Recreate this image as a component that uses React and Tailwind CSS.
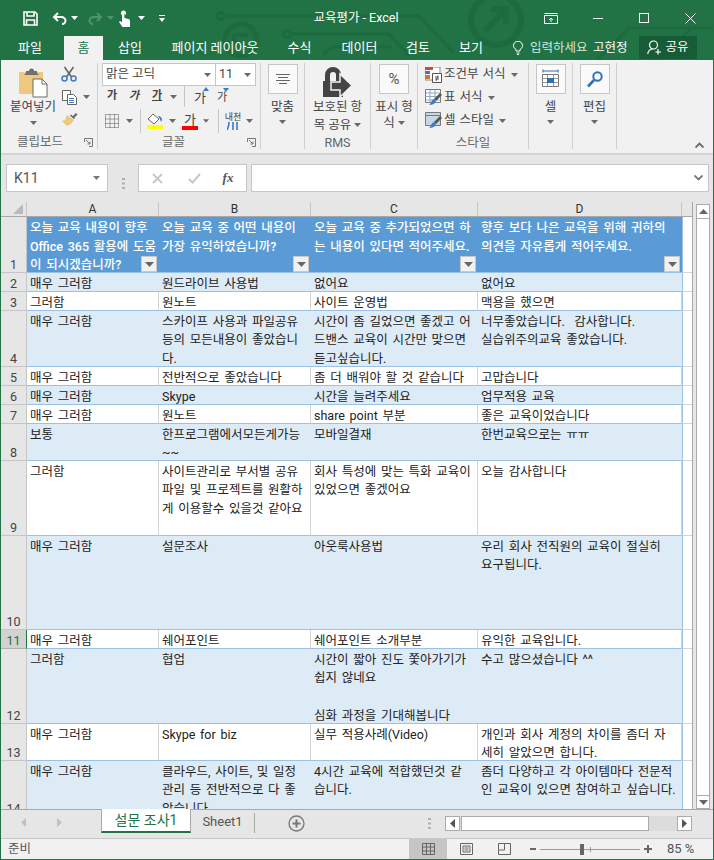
const rows = [
  { n: 2, h: 19, band: true, cells: ["매우 그러함", "원드라이브 사용법", "없어요", "없어요"] },
  { n: 3, h: 19, cells: ["그러함", "원노트", "사이트 운영법", "맥용을 했으면"] },
  { n: 4, h: 56, band: true, cells: ["매우 그러함", "스카이프 사용과 파일공유\n등의 모든내용이 좋았습니\n다.", "시간이 좀 길었으면 좋겠고 어\n드밴스 교육이 시간만 맞으면\n듣고싶습니다.", "너무좋았습니다.  감사합니다.\n실습위주의교육 좋았습니다."] },
  { n: 5, h: 19, cells: ["매우 그러함", "전반적으로 좋았습니다", "좀 더 배워야 할 것 같습니다", "고맙습니다"] },
  { n: 6, h: 19, band: true, cells: ["매우 그러함", "Skype", "시간을 늘려주세요", "업무적용 교육"] },
  { n: 7, h: 19, cells: ["매우 그러함", "원노트", "share point 부분", "좋은 교육이었습니다"] },
  { n: 8, h: 37, band: true, cells: ["보통", "한프로그램에서모든게가능\n~~", "모바일결재", "한번교육으로는 ㅠㅠ"] },
  { n: 9, h: 75, cells: ["그러함", "사이트관리로 부서별 공유\n파일 및 프로젝트를 원활하\n게 이용할수 있을것 같아요", "회사 특성에 맞는 특화 교육이\n있었으면 좋겠어요", "오늘 감사합니다"] },
  { n: 10, h: 94, band: true, cells: ["매우 그러함", "설문조사", "아웃룩사용법", "우리 회사 전직원의 교육이 절실히\n요구됩니다."] },
  { n: 11, h: 19, active: true, cells: ["매우 그러함", "쉐어포인트", "쉐어포인트 소개부분", "유익한 교육입니다."] },
  { n: 12, h: 75, band: true, cells: ["그러함", "협업", "시간이 짧아 진도 쫓아가기가\n쉽지 않네요\n\n심화 과정을 기대해봅니다", "수고 많으셨습니다 ^^"] },
  { n: 13, h: 37, cells: ["매우 그러함", "Skype for biz", "실무 적용사례(Video)", "개인과 회사 계정의 차이를 좀더 자\n세히 알았으면 합니다."] },
  { n: 14, h: 56, band: true, cells: ["매우 그러함", "클라우드, 사이트, 및 일정\n관리 등 전반적으로 다 좋\n았습니다.", "4시간 교육에 적합했던것 같\n습니다.", "좀더 다양하고 각 아이템마다 전문적\n인 교육이 있으면 참여하고 싶습니다."] },
];

const headers = [
  "오늘 교육 내용이 향후\nOffice 365 활용에 도움\n이 되시겠습니까?",
  "오늘 교육 중 어떤 내용이\n가장 유익하였습니까?",
  "오늘 교육 중 추가되었으면 하\n는 내용이 있다면 적어주세요.",
  "향후 보다 나은 교육을 위해 귀하의\n의견을 자유롭게 적어주세요.",
];

const colWidths = ["w-[132px]", "w-[152px]", "w-[167px]", "w-[204px]"];

const Caret = ({ color = "#6a6a6a" }) => (
  <svg width="7" height="4" viewBox="0 0 7 4"><path d="M0 0h7L3.5 4z" fill={color} /></svg>
);

const Cell = ({ className = "", children }) => (
  <div className={`flex items-center justify-center shrink-0 ${className}`}>{children}</div>
);

const RowHeader = ({ n, active }) => (
  <div className={`w-[26px] shrink-0 flex items-end justify-center border-r border-b text-[12.5px] leading-[15px] ${active ? "bg-[#d2d2d2] text-[#217346] border-r-[#217346] border-b-[#b0b0b0]" : "bg-[#e6e6e6] text-[#444] border-r-[#c6c6c6] border-b-[#c6c6c6]"}`}>
    {n}
  </div>
);

const FilterButton = () => (
  <div className="absolute right-[2px] bottom-0 w-[16px] h-[16px] bg-[#f1f1f1] border border-[#c8c8c8] flex items-center justify-center">
    <svg width="9" height="5" viewBox="0 0 9 5"><path d="M0 0h9L4.5 5z" fill="#666" /></svg>
  </div>
);

const CircuitArt = () => (
  <svg className="absolute left-0 top-0 w-[714px] h-[60px]" viewBox="0 0 714 60" fill="none" stroke="#1d6a3e" strokeWidth="3">
    <circle cx="220" cy="16" r="3.5" />
    <path d="M224 16H400h18l34 36" />
    <circle cx="286" cy="34" r="3.5" />
    <path d="M290 34h98l20 22" />
    <path d="M322 54l10-7h58" />
    <circle cx="240" cy="40" r="16" strokeWidth="5" />
    <path d="M233 35h14M233 35v12" strokeWidth="4" />
    <circle cx="495" cy="20" r="25" strokeWidth="6" />
    <path d="M484 31l20-21M490 9h15v15" strokeWidth="6" />
    <path d="M596 60l32-32h86M655 60l34-30" />
  </svg>
);

const SaveIcon = () => (
  <svg width="15" height="15" viewBox="0 0 15 15" fill="none" stroke="#fff" strokeWidth="1.6">
    <path d="M1 1h11l2 2v11H1z" />
    <path d="M4 1v4h7V1M3.5 14V9h8v5" />
  </svg>
);

const UndoIcon = ({ color, flip }) => (
  <svg width="15" height="13" viewBox="0 0 15 13" fill="none" stroke={color} strokeWidth="2" className={flip ? "-scale-x-100" : ""}>
    <path d="M6 1L2 5l4 4M2 5h7c3 0 4.500 2 4.500 3.500S12.500 12 10 12" />
  </svg>
);

const TouchIcon = () => (
  <svg width="13" height="17" viewBox="0 0 13 17" fill="#fff">
    <path d="M3 3a2.500 2.500 0 015 0v2a3.500 3.500 0 00-5 0z" />
    <path d="M4 3.500a1.200 1.200 0 012.400 0V8l4 1c1.200.3 1.600 1 1.600 2v6H4.500L1 12l1-1 2 1.200z" />
  </svg>
);

const PasteIcon = () => (
  <svg width="30" height="30" viewBox="0 0 30 30">
    <path d="M1 4h24v22H1z" fill="#edc87e" />
    <path d="M8 5V3h3a2.500 2.500 0 015 0h3v2l2 2H6z" fill="#707070" />
    <path d="M15 11h9l5 5v13H15z" fill="#fff" stroke="#6a6a6a" />
    <path d="M24 11v5h5" fill="none" stroke="#6a6a6a" />
  </svg>
);

const ScissorsIcon = () => (
  <svg width="16" height="16" viewBox="0 0 16 16" fill="none">
    <path d="M3.500 1l7 10M12.500 1l-7 10" stroke="#666" strokeWidth="1.600" />
    <circle cx="3.500" cy="12.500" r="2.500" stroke="#3f7cbf" strokeWidth="1.500" />
    <circle cx="12.500" cy="12.500" r="2.500" stroke="#3f7cbf" strokeWidth="1.500" />
  </svg>
);

const CopyIcon = () => (
  <svg width="16" height="16" viewBox="0 0 16 16" fill="#fff" stroke="#666">
    <path d="M1.500 1.500h8v10h-8z" />
    <path d="M6.500 5.500h6l3 3v7h-9z" />
    <path d="M8 9.500h5M8 11.500h5M8 13.500h5" stroke="#3f7cbf" />
  </svg>
);

const BrushIcon = () => (
  <svg width="17" height="15" viewBox="0 0 17 15">
    <path d="M11 5l4-4 1.500 1.500-4 4z" fill="#666" />
    <path d="M6 3l7 5-3 4-4 2-5-5 3-1z" fill="#edc87e" />
    <path d="M9 3.500l1-1 4 3.500-1 1z" fill="#666" />
  </svg>
);

const BorderIcon = () => (
  <svg width="14" height="14" viewBox="0 0 14 14" fill="none" stroke="#555" strokeDasharray="1 1">
    <path d="M.5.500h13v13H.500zM.500 5h13M.500 9.500h13M5 .500v13M9.500.500v13" />
  </svg>
);

const FillIcon = () => (
  <div className="flex flex-col items-center">
    <svg width="16" height="12" viewBox="0 0 16 12" fill="none">
      <path d="M6 1l6 5-5 5-6-5z" fill="#fff" stroke="#666" />
      <path d="M11 3c2 0 4 1 4 4l-1 2-1-3z" fill="#3f7cbf" />
    </svg>
    <div className="w-[16px] h-[4px] bg-[#ffff00]" />
  </div>
);

const AlignIcon = () => (
  <svg width="14" height="12" viewBox="0 0 14 12" stroke="#666"><path d="M0 1.500h14M2 4.500h10M0 7.500h14M3 10.500h8" /></svg>
);

const LockIcon = () => (
  <svg width="29" height="30" viewBox="0 0 29 30" fill="#444">
    <path d="M2 14V8a8 8 0 0116 0v6h-5V8a3 3 0 00-6 0v6z" />
    <path d="M0 14h20v16H0z" />
    <path d="M8 15h9V7l12 11.500L17 30v-7H8z" stroke="#f1f1f1" strokeWidth="1.500" />
  </svg>
);

const CondIcon = () => (
  <svg width="17" height="16" viewBox="0 0 17 16">
    <path d="M0 0h15v13H0z" fill="#fff" stroke="#888" />
    <path d="M0 0h8v3H0z" fill="#c8502a" />
    <path d="M0 4h5v3H0z" fill="#4472c4" />
    <path d="M0 8h5v4H0z" fill="#d9722c" />
    <path d="M7.500 6.500h9v9h-9z" fill="#fff" stroke="#555" />
    <path d="M10 10h4M10 12h4M13 8.500l-2 5.500" stroke="#555" fill="none" />
  </svg>
);

const TableIcon = ({ plain }) => (
  <svg width="17" height="17" viewBox="0 0 17 17">
    <path d="M.5.500h15v13H.500z" fill={plain ? "#c9d6e6" : "#fff"} stroke="#777" />
    {!plain && <path d="M.500 4h15M.500 7.500h15M.500 11h15M5 .500v13M10 .500v13" stroke="#8fa8c4" fill="none" />}
    {plain && <path d="M.500 3.500h15" stroke="#777" fill="none" />}
    <path d="M15 4l2 2-6 6-2-2z" fill="#555" />
    <path d="M9 10l2 2c-1 3-4 4-7 4 2-1 2-5 5-6z" fill="#3f7cbf" />
  </svg>
);

const CellsIcon = () => (
  <svg width="19" height="20" viewBox="0 0 19 20" fill="none">
    <path d="M1.500 5.500h16v12h-16z" fill="#fff" stroke="#777" />
    <path d="M1.500 9.500h16M1.500 13.500h16M6.500 5.500v12M12.500 5.500v12" stroke="#999" />
    <path d="M6 9h7v5H6z" fill="#2f6fb5" />
    <path d="M2 2h15M2 .500v3M17 .500v3" stroke="#2f6fb5" />
  </svg>
);

const SearchIcon = () => (
  <svg width="16" height="17" viewBox="0 0 16 17" fill="none" stroke="#2f72b8">
    <circle cx="10.500" cy="5.500" r="4.200" strokeWidth="2" />
    <path d="M7 9l-6 6.500" strokeWidth="2.600" />
  </svg>
);

const Launcher = () => (
  <svg width="9" height="9" viewBox="0 0 9 9" fill="none" stroke="#777">
    <path d="M.5 4V.500H8.500V8.500H5" />
    <path d="M2 2l4 4M6 3.500V6H3.500" />
  </svg>
);

const ToolSep = ({ className = "" }) => <div className={`w-px shrink-0 bg-[#c6c6c6] ${className}`} />;

const BigButton = ({ children }) => (
  <div className="w-[30px] h-[30px] bg-[#fafafa] border border-[#c6c6c6] flex items-center justify-center">{children}</div>
);

// 버튼 하나짜리 그룹 (맞춤, 셀, 편집, 표시 형식)
const ButtonGroup = ({ width, icon, lines }) => (
  <div className={`${width} shrink-0 border-r border-[#d0d0d0] flex flex-col items-center pt-[1px] text-[12.5px] leading-[16px] text-[#444]`}>
    <BigButton>{icon}</BigButton>
    <div className="mt-[5px] whitespace-nowrap">{lines[0]}</div>
    {lines[1] ? (
      <div className="whitespace-nowrap flex items-center gap-[3px]">{lines[1]}<Caret /></div>
    ) : (
      <div className="mt-[5px] flex"><Caret /></div>
    )}
  </div>
);

const StyleRow = ({ icon, label }) => (
  <div className="flex items-center h-[23px] gap-[1px] text-[12.5px] whitespace-nowrap text-[#444] [word-spacing:1px]">
    <div className="w-[19px] flex items-center justify-center">{icon}</div>
    <span>{label}</span>
    <div className="ml-[4px] flex"><Caret /></div>
  </div>
);

const Ribbon = () => (
  <div className="h-[95px] shrink-0 bg-[#f1f1f1] border-b-2 border-[#d4d4d4] pt-[3px] pb-[4px] flex text-[#444]">
    {/* 클립보드 */}
    <div className="w-[97px] shrink-0 border-r border-[#d0d0d0] flex flex-col">
      <div className="flex-1 flex min-h-0">
        <div className="w-[56px] shrink-0 pl-[8px] pt-[5px] flex flex-col items-center text-[12.5px] leading-[16px]">
          <PasteIcon />
          <div className="mt-[1px] whitespace-nowrap">붙여넣기</div>
          <div className="mt-[6px] flex"><Caret /></div>
        </div>
        <div className="flex flex-col -mt-px">
          <Cell className="w-[24px] h-[23px]"><ScissorsIcon /></Cell>
          <div className="flex items-center h-[23px]">
            <Cell className="w-[24px]"><CopyIcon /></Cell>
            <Cell className="w-[10px]"><Caret /></Cell>
          </div>
          <Cell className="w-[24px] h-[23px]"><BrushIcon /></Cell>
        </div>
      </div>
      <div className="h-[13px] flex items-center justify-between pl-[16px] pr-[4px] text-[12.5px] text-[#666]">
        <span>클립보드</span>
        <Launcher />
      </div>
    </div>

    {/* 글꼴 */}
    <div className="w-[163px] shrink-0 border-r border-[#d0d0d0] flex flex-col pl-[4px]">
      <div className="flex h-[23px] w-[154px] bg-white border border-[#c6c6c6] text-[12.5px]">
        <div className="w-[113px] flex items-center justify-between pl-[3px] pr-[4px] border-r border-[#c6c6c6]">
          <span>맑은 고딕</span><Caret />
        </div>
        <div className="flex-1 flex items-center justify-between pl-[3px] pr-[4px]">
          <span>11</span><Caret />
        </div>
      </div>
      <div className="flex items-center h-[21px] text-[11px] font-bold">
        <Cell className="w-[20px]">가</Cell>
        <Cell className="w-[24px] italic">가</Cell>
        <Cell className="w-[22px] underline">가</Cell>
        <Cell className="w-[10px]"><Caret /></Cell>
        <div className="w-[6px] shrink-0" />
        <ToolSep className="h-[21px]" />
        <Cell className="w-[30px] relative text-[13px] font-normal pt-[2px]">
          가
          <svg className="absolute right-[6px] top-[1px]" width="6" height="4" viewBox="0 0 6 4"><path d="M3 0l3 4H0z" fill="#3f7cbf" /></svg>
        </Cell>
        <Cell className="w-[14px] relative text-[11px] font-normal pt-[3px]">
          가
          <svg className="absolute right-0 top-[1px]" width="6" height="4" viewBox="0 0 6 4"><path d="M0 0h6L3 4z" fill="#3f7cbf" /></svg>
        </Cell>
      </div>
      <div className="flex items-center h-[24px] mt-[2px]">
        <Cell className="w-[20px]"><BorderIcon /></Cell>
        <Cell className="w-[14px]"><Caret /></Cell>
        <div className="w-[4px] shrink-0" />
        <ToolSep className="h-[24px]" />
        <div className="w-[2px] shrink-0" />
        <Cell className="w-[24px]"><FillIcon /></Cell>
        <Cell className="w-[10px]"><Caret /></Cell>
        <Cell className="w-[26px]">
          <div className="flex flex-col items-center text-[13px] leading-[13px]">
            가
            <div className="w-[16px] h-[4px] bg-[#ff0000]" />
          </div>
        </Cell>
        <Cell className="w-[6px]"><Caret /></Cell>
        <div className="w-[9px] shrink-0" />
        <ToolSep className="h-[24px]" />
        <div className="w-[2px] shrink-0" />
        <Cell className="w-[24px]">
          <div className="flex flex-col items-center text-[9px] leading-[9px]">
            내천
            <svg width="12" height="8" viewBox="0 0 12 8" stroke="#2f72b8" strokeWidth="1.500"><path d="M2 0c0 4-1 6-2 8M6 0v8M10 0v8" fill="none" /></svg>
          </div>
        </Cell>
        <Cell className="w-[8px]"><Caret /></Cell>
      </div>
      <div className="flex-1" />
      <div className="h-[13px] flex items-center justify-between pl-[60px] pr-[4px] text-[12.5px] text-[#666]">
        <span>글꼴</span>
        <Launcher />
      </div>
    </div>

    <ButtonGroup width="w-[44px]" icon={<AlignIcon />} lines={["맞춤"]} />

    {/* RMS */}
    <div className="w-[66px] shrink-0 border-r border-[#d0d0d0] flex flex-col items-center text-[12.5px] leading-[16px]">
      <div className="mt-[4px] flex"><LockIcon /></div>
      <div className="mt-[2px] whitespace-nowrap">보호된 항</div>
      <div className="whitespace-nowrap flex items-center gap-[3px] mt-[2px]">목 공유<Caret /></div>
      <div className="flex-1" />
      <div className="h-[13px] text-[#666] leading-[13px]">RMS</div>
    </div>

    <ButtonGroup
      width="w-[47px]"
      icon={<span className="text-[15px] text-[#555]">%</span>}
      lines={["표시 형", "식"]}
    />

    {/* 스타일 */}
    <div className="w-[111px] shrink-0 border-r border-[#d0d0d0] flex flex-col pl-[6px]">
      <StyleRow icon={<CondIcon />} label="조건부 서식" />
      <StyleRow icon={<TableIcon />} label="표 서식" />
      <StyleRow icon={<TableIcon plain />} label="셀 스타일" />
      <div className="flex-1" />
      <div className="h-[13px] text-center pr-[6px] text-[12.5px] leading-[13px] text-[#666]">스타일</div>
    </div>

    <ButtonGroup width="w-[44px]" icon={<CellsIcon />} lines={["셀"]} />
    <ButtonGroup width="w-[44px]" icon={<SearchIcon />} lines={["편집"]} />

    <div className="flex-1 flex items-end justify-end pr-[9px] pb-[1px]">
      <svg width="9" height="6" viewBox="0 0 9 6" fill="none" stroke="#666" strokeWidth="1.800"><path d="M.5 5.500l4-4 4 4" /></svg>
    </div>
  </div>
);

const FormulaBar = () => (
  <div className="h-[47px] shrink-0 bg-[#e6e6e6] pt-[9px] pl-[5px] pr-[4px] flex text-[#555]">
    <div className="w-[102px] h-[28px] bg-white border border-[#c6c6c6] flex items-center justify-between pl-[7px] pr-[7px] text-[14px]">
      <span>K11</span><Caret color="#777" />
    </div>
    <div className="w-[30px] flex items-center justify-center">
      <svg width="3" height="11" viewBox="0 0 3 11" fill="#b0b0b0"><path d="M0 0h3v2H0zM0 4.500h3v2H0zM0 9h3v2H0z" /></svg>
    </div>
    <div className="w-[109px] h-[28px] bg-white border border-[#c6c6c6] flex items-center">
      <Cell className="w-[37px]">
        <svg width="11" height="11" viewBox="0 0 11 11" stroke="#c6c6c6" strokeWidth="1.800"><path d="M1 1l9 9M10 1l-9 9" /></svg>
      </Cell>
      <Cell className="w-[37px]">
        <svg width="13" height="11" viewBox="0 0 13 11" fill="none" stroke="#c6c6c6" strokeWidth="2"><path d="M1 6l3.500 3.500L12 1" /></svg>
      </Cell>
      <Cell className="w-[30px] font-['Liberation_Serif',serif] italic text-[13px] font-bold text-[#555]">fx</Cell>
    </div>
    <div className="w-[4px] shrink-0" />
    <div className="flex-1 h-[28px] bg-white border border-[#c6c6c6] flex items-center justify-end pr-[5px]">
      <svg width="9" height="6" viewBox="0 0 9 6" fill="none" stroke="#777" strokeWidth="1.800"><path d="M.5.500l4 4 4-4" /></svg>
    </div>
  </div>
);

const Sheet = () => (
  <div className="h-[607px] shrink-0 flex bg-[#e6e6e6]">
    <div className="w-[691px] shrink-0 flex flex-col overflow-hidden bg-white text-[12.5px] leading-[18.7px] text-[#222] [word-spacing:1.6px]">
      <div className="h-[15px] shrink-0 flex bg-[#e6e6e6] border-b border-[#a8a8a8] text-[#333] text-[12px] leading-[14px]">
        <div className="w-[26px] shrink-0 border-r border-[#c6c6c6] flex items-end justify-end pr-[3px] pb-[2px]">
          <svg width="10" height="10" viewBox="0 0 10 10"><path d="M10 0v10H0z" fill="#b9b9b9" /></svg>
        </div>
        {["A", "B", "C", "D"].map((c, i) => (
          <div key={c} className={`${colWidths[i]} shrink-0 text-center border-r border-[#c6c6c6]`}>{c}</div>
        ))}
        <div className="w-[10px] shrink-0" />
      </div>

      <div className="h-[56px] shrink-0 flex">
        <RowHeader n={1} />
        {headers.map((text, i) => (
          <div key={i} className={`${colWidths[i]} shrink-0 relative bg-[#5b9bd5] border-b border-[#9bc2e6] text-white font-medium pl-[3px] pt-[2px] whitespace-pre overflow-hidden`}>
            {text}
            <FilterButton />
          </div>
        ))}
        <div className="w-[10px] shrink-0 border-l border-b border-[#d4d4d4] border-l-[#9bc2e6]" />
      </div>

      {rows.map((row) => (
        <div key={row.n} className="flex shrink-0" style={{ height: row.h }}>
          <RowHeader n={row.n} active={row.active} />
          {row.cells.map((text, i) => (
            <div
              key={i}
              className={`${colWidths[i]} shrink-0 border-b border-[#9bc2e6] pl-[3px] pt-[1.5px] whitespace-pre overflow-hidden ${row.band ? "bg-[#ddebf7]" : "bg-white border-r border-r-[#d4d4d4]"}`}
            >
              {text}
            </div>
          ))}
          <div className="w-[10px] shrink-0 border-l border-b border-[#d4d4d4] border-l-[#9bc2e6]" />
        </div>
      ))}
    </div>

    {/* 세로 스크롤바 */}
    <div className="flex-1 border-l border-[#a8a8a8] pl-[3px] pr-[3px] pt-[2px] flex flex-col">
      <div className="h-[15px] bg-white border border-[#ababab] flex items-center justify-center">
        <svg width="9" height="5" viewBox="0 0 9 5"><path d="M4.500 0L9 5H0z" fill="#666" /></svg>
      </div>
      <div className="flex-1 bg-white border-x border-[#ababab]" />
      <div className="h-[14px] bg-white border border-[#ababab] flex items-center justify-center">
        <svg width="9" height="5" viewBox="0 0 9 5"><path d="M0 0h9L4.500 5z" fill="#666" /></svg>
      </div>
    </div>
  </div>
);

const TabBar = () => (
  <div className="h-[29px] shrink-0 bg-[#e6e6e6] border-t border-[#a8a8a8] flex text-[14px] leading-[18px]">
    <Cell className="w-[44px] h-[24px]">
      <svg width="5" height="9" viewBox="0 0 5 9"><path d="M5 0v9L0 4.500z" fill="#c0c0c0" /></svg>
    </Cell>
    <Cell className="w-[29px] h-[24px]">
      <svg width="5" height="9" viewBox="0 0 5 9"><path d="M0 0v9l5-4.500z" fill="#c0c0c0" /></svg>
    </Cell>
    <div className="w-[27px] shrink-0" />
    <div className="w-[90px] h-[24px] shrink-0 bg-white border-x border-b-2 border-x-[#a8a8a8] border-b-[#217346] text-[#217346] flex items-center justify-center -mt-px">
      설문 조사1
    </div>
    <div className="w-[63px] h-[24px] shrink-0 flex items-center justify-center text-[#555] text-[13px]">Sheet1</div>
    <div className="w-px h-[20px] mt-[3px] shrink-0 bg-[#a8a8a8]" />
    <Cell className="w-[83px] h-[26px]">
      <svg width="17" height="17" viewBox="0 0 17 17" fill="none" stroke="#777">
        <circle cx="8.500" cy="8.500" r="7.500" strokeWidth="1.300" />
        <path d="M8.500 4.500v8M4.500 8.500h8" strokeWidth="2" />
      </svg>
    </Cell>
    <div className="w-[86px] shrink-0" />
    <Cell className="w-[10px] h-[26px]">
      <svg width="3" height="11" viewBox="0 0 3 11" fill="#b0b0b0"><path d="M0 0h3v2H0zM0 4.500h3v2H0zM0 9h3v2H0z" /></svg>
    </Cell>
    <div className="w-[11px] shrink-0" />
    <div className="w-[247px] h-[15px] mt-[6px] shrink-0 flex bg-[#dcdcdc]">
      <Cell className="w-[15px] h-full bg-white border border-[#ababab]">
        <svg width="5" height="9" viewBox="0 0 5 9"><path d="M5 0v9L0 4.500z" fill="#555" /></svg>
      </Cell>
      <div className="w-[188px] ml-[1px] h-full bg-white border border-[#ababab]" />
      <div className="flex-1" />
      <Cell className="w-[15px] h-full bg-white border border-[#ababab]">
        <svg width="5" height="9" viewBox="0 0 5 9"><path d="M0 0v9l5-4.500z" fill="#555" /></svg>
      </Cell>
    </div>
  </div>
);

const StatusBar = () => (
  <div className="flex-1 bg-[#f1f1f1] border-t border-[#c6c6c6] flex items-stretch text-[12.5px] text-[#555]">
    <div className="w-[408px] shrink-0 pl-[7px] flex items-center">준비</div>
    <Cell className="w-[38px] bg-[#c6c6c6]">
      <svg width="13" height="12" viewBox="0 0 13 12" fill="none" stroke="#666"><path d="M.500.500h12v11H.500zM.500 4h12M.500 8h12M4.500.500v11M8.500.500v11" /></svg>
    </Cell>
    <Cell className="w-[38px]">
      <svg width="13" height="12" viewBox="0 0 13 12" fill="none" stroke="#666"><path d="M.500.500h12v11H.500zM3 3h7v6H3zM4.500 5h4M4.500 7h4" /></svg>
    </Cell>
    <Cell className="w-[38px]">
      <svg width="13" height="12" viewBox="0 0 13 12" fill="none" stroke="#666"><path d="M.500 6.500V.500h12v11H.500zM.500 7h6V.500" /></svg>
    </Cell>
    <div className="w-[7px] shrink-0" />
    <div className="flex items-center">
      <div className="w-[6px] h-[2px] bg-[#666] mr-[4px]" />
      <div className="w-[100px] h-px bg-[#999] relative">
        <div className="absolute left-[40px] -top-[5px] w-[4px] h-[11px] bg-[#666]" />
        <div className="absolute left-[50px] -top-[2px] w-px h-[5px] bg-[#999]" />
      </div>
      <svg className="ml-[4px]" width="8" height="8" viewBox="0 0 8 8" stroke="#666" strokeWidth="2"><path d="M4 0v8M0 4h8" /></svg>
    </div>
    <div className="ml-[15px] flex items-center text-[13px]">85 %</div>
  </div>
);

const App = () => {
  return (
    <div className="w-[714px] h-[860px] overflow-hidden flex flex-col bg-[#e6e6e6] border-x border-b border-[#217346] font-['Roboto','Noto_Sans_CJK_KR',sans-serif]">
      <div className="relative h-[60px] shrink-0 bg-[#217346] text-white">
        <CircuitArt />
        {/* 제목 표시줄 */}
        <div className="relative h-[36px] flex items-center">
          <div className="w-[20px] shrink-0" />
          <Cell className="w-[18px]"><SaveIcon /></Cell>
          <div className="w-[12px] shrink-0" />
          <Cell className="w-[16px]"><UndoIcon color="#fff" /></Cell>
          <Cell className="w-[14px]"><Caret color="#fff" /></Cell>
          <div className="w-[6px] shrink-0" />
          <Cell className="w-[16px]"><UndoIcon color="#4f9470" flip /></Cell>
          <Cell className="w-[14px]"><Caret color="#4f9470" /></Cell>
          <Cell className="w-[14px]"><TouchIcon /></Cell>
          <Cell className="w-[20px]"><Caret color="#fff" /></Cell>
          <Cell className="w-[22px]">
            <svg width="6" height="7" viewBox="0 0 6 7" fill="#fff"><path d="M0 0h6v1H0zM0 3h6L3 7z" /></svg>
          </Cell>
          <div className="w-[366px] shrink-0 text-center text-[12.5px]">교육평가 - Excel</div>
          <Cell className="w-[24px]">
            <svg width="14" height="11" viewBox="0 0 14 11" fill="none" stroke="#fff"><path d="M.500 2.500h13v8H.500zM.500.500h13M7 9V5M5 7l2-2 2 2" /></svg>
          </Cell>
          <div className="w-[12px] shrink-0" />
          <Cell className="w-[46px]"><div className="w-[10px] h-px bg-white" /></Cell>
          <Cell className="w-[46px]"><div className="w-[10px] h-[10px] border border-white" /></Cell>
          <Cell className="w-[46px]">
            <svg width="11" height="11" viewBox="0 0 11 11" stroke="#fff"><path d="M.500.500l10 10M10.500.500l-10 10" /></svg>
          </Cell>
        </div>
        {/* 리본 탭 */}
        <div className="relative h-[24px] flex items-center text-[13px]">
          <Cell className="w-[58px] h-full">파일</Cell>
          <div className="w-[5px] shrink-0" />
          <Cell className="w-[39px] h-full bg-[#f1f1f1] text-[#217346]">홈</Cell>
          <Cell className="w-[54px] h-full">삽입</Cell>
          <Cell className="w-[116px] h-full">페이지 레이아웃</Cell>
          <Cell className="w-[53px] h-full">수식</Cell>
          <Cell className="w-[67px] h-full">데이터</Cell>
          <Cell className="w-[50px] h-full">검토</Cell>
          <Cell className="w-[56px] h-full">보기</Cell>
          <div className="w-[12px] shrink-0" />
          <Cell className="w-[14px]">
            <svg width="10" height="14" viewBox="0 0 10 14" fill="none" stroke="#fff"><path d="M3 10V8.500C1.500 7.500.500 6.300.500 4.700a4.500 4.500 0 019 0c0 1.600-1 2.800-2.500 3.800V10zM3.500 12h3M4 13.500h2" /></svg>
          </Cell>
          <div className="w-[5px] shrink-0" />
          <div className="w-[63px] shrink-0 text-[#d5e6dc] whitespace-nowrap text-[12.5px]">입력하세요</div>
          <div className="w-[46px] shrink-0 text-[12.5px] whitespace-nowrap">고현정</div>
          <div className="w-[58px] h-[23px] shrink-0 bg-[#185c37] flex items-center justify-center gap-[3px] self-start text-[12.5px]">
            <svg width="15" height="15" viewBox="0 0 15 15" fill="none" stroke="#fff" strokeWidth="1.200"><circle cx="6.500" cy="5" r="4" /><path d="M.700 14c.5-3 2.500-5 5-5M11 9v5.500M8.500 12H14" /></svg>
            공유
          </div>
        </div>
      </div>
      <Ribbon />
      <FormulaBar />
      <Sheet />
      <TabBar />
      <StatusBar />
    </div>
  );
};

export default App;
